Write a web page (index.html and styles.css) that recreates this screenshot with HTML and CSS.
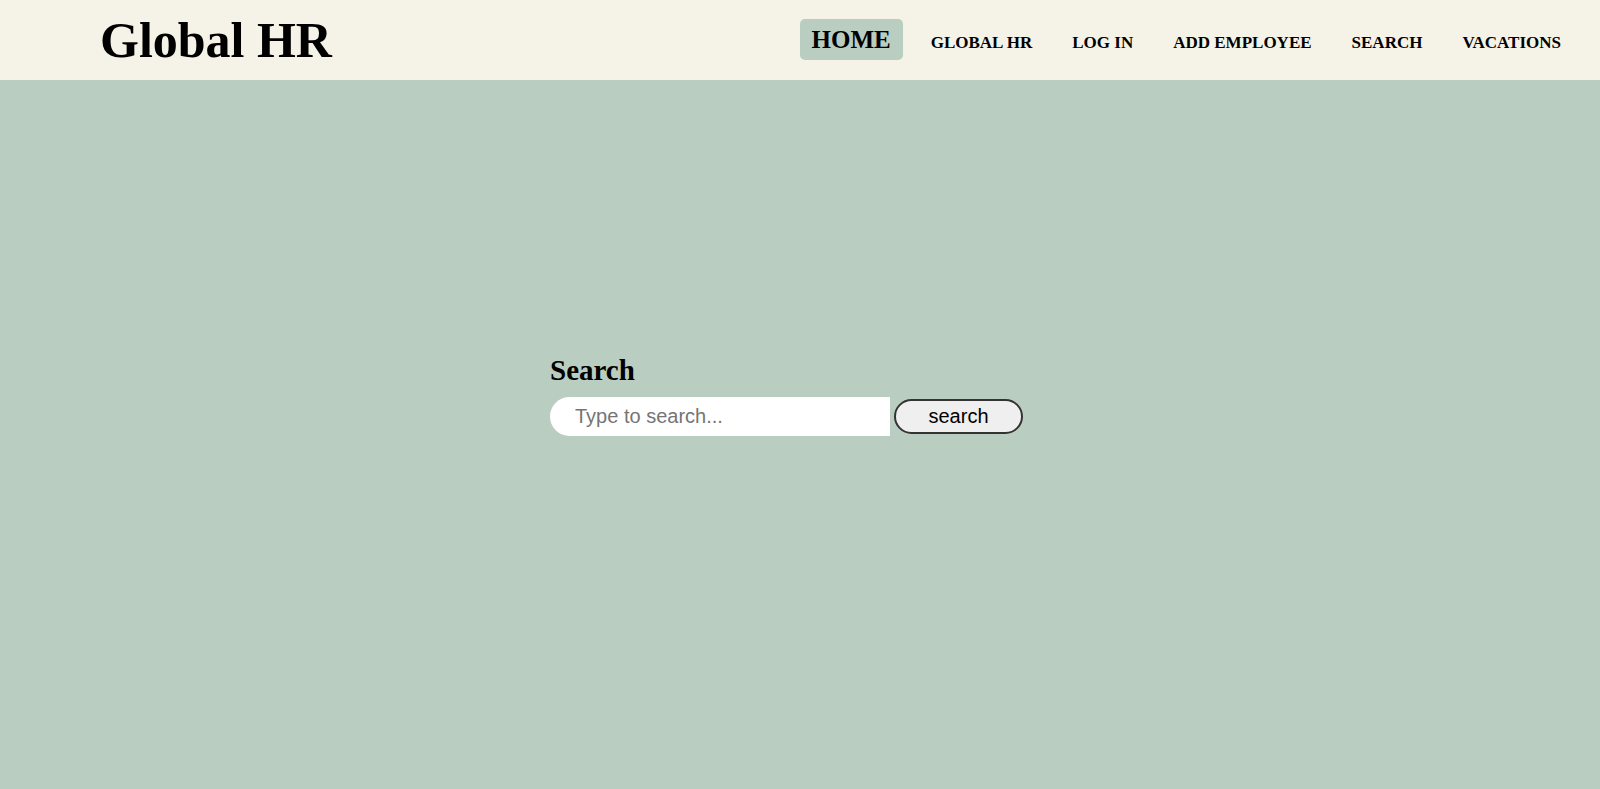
FILE: index.html
```html
<!DOCTYPE html>
<html lang="en">
<head>
<meta charset="utf-8">
<title>Global HR</title>
<link rel="stylesheet" href="styles.css">
</head>
<body>
<header class="topbar">
  <h1 class="brand">Global HR</h1>
  <nav class="nav">
    <a class="nav-link active" href="#">HOME</a>
    <a class="nav-link" href="#">GLOBAL HR</a>
    <a class="nav-link" href="#">LOG IN</a>
    <a class="nav-link" href="#">ADD EMPLOYEE</a>
    <a class="nav-link" href="#">SEARCH</a>
    <a class="nav-link" href="#">VACATIONS</a>
  </nav>
</header>
<main class="main">
  <section class="search-box">
    <h2 class="search-title">Search</h2>
    <form class="search-form">
      <input class="search-input" type="text" placeholder="Type to search...">
      <button class="search-btn" type="button">search</button>
    </form>
  </section>
</main>
</body>
</html>
```

FILE: styles.css
```css
* { box-sizing: border-box; }
html, body { margin: 0; padding: 0; }
body {
  font-family: "Liberation Serif", "Times New Roman", serif;
  background: #bacdc1;
  color: #000;
  min-height: 100vh;
}
.topbar {
  height: 80px;
  background: #f5f3e8;
  display: flex;
  align-items: center;
  justify-content: space-between;
  padding: 0 27px 0 100px;
}
.brand {
  margin: 0;
  font-size: 50px;
  font-weight: bold;
  line-height: normal;
}
.nav {
  display: flex;
  align-items: baseline;
  gap: 16px;
  margin-bottom: 2px;
}
.nav-link {
  color: #000;
  text-decoration: none;
  font-weight: bold;
  font-size: 17px;
  padding: 6px 12px;
  border-radius: 5px;
  line-height: normal;
}
.nav-link.active {
  font-size: 25px;
  background: #bacdc1;
  padding: 7px 12px 6px 12px;
}
.main {
  padding-top: 274px;
}
.search-box {
  width: 500px;
  margin: 0 auto;
}
.search-title {
  margin: 0 0 10px 0;
  font-size: 29px;
  font-weight: bold;
  line-height: normal;
}
.search-form {
  display: flex;
  align-items: center;
  gap: 4px;
}
.search-input {
  width: 340px;
  height: 39px;
  border: none;
  outline: none;
  border-radius: 20px 0 0 20px;
  background: #fff;
  padding: 0 0 0 25px;
  font-family: "Liberation Sans", Arial, sans-serif;
  font-size: 20px;
  color: #000;
}
.search-input::placeholder { color: #757575; }
.search-btn {
  width: 129px;
  height: 35px;
  border: 2px solid #333;
  border-radius: 18px;
  background: #efefef;
  font-family: "Liberation Sans", Arial, sans-serif;
  font-size: 20px;
  color: #000;
  padding: 0;
}
```
